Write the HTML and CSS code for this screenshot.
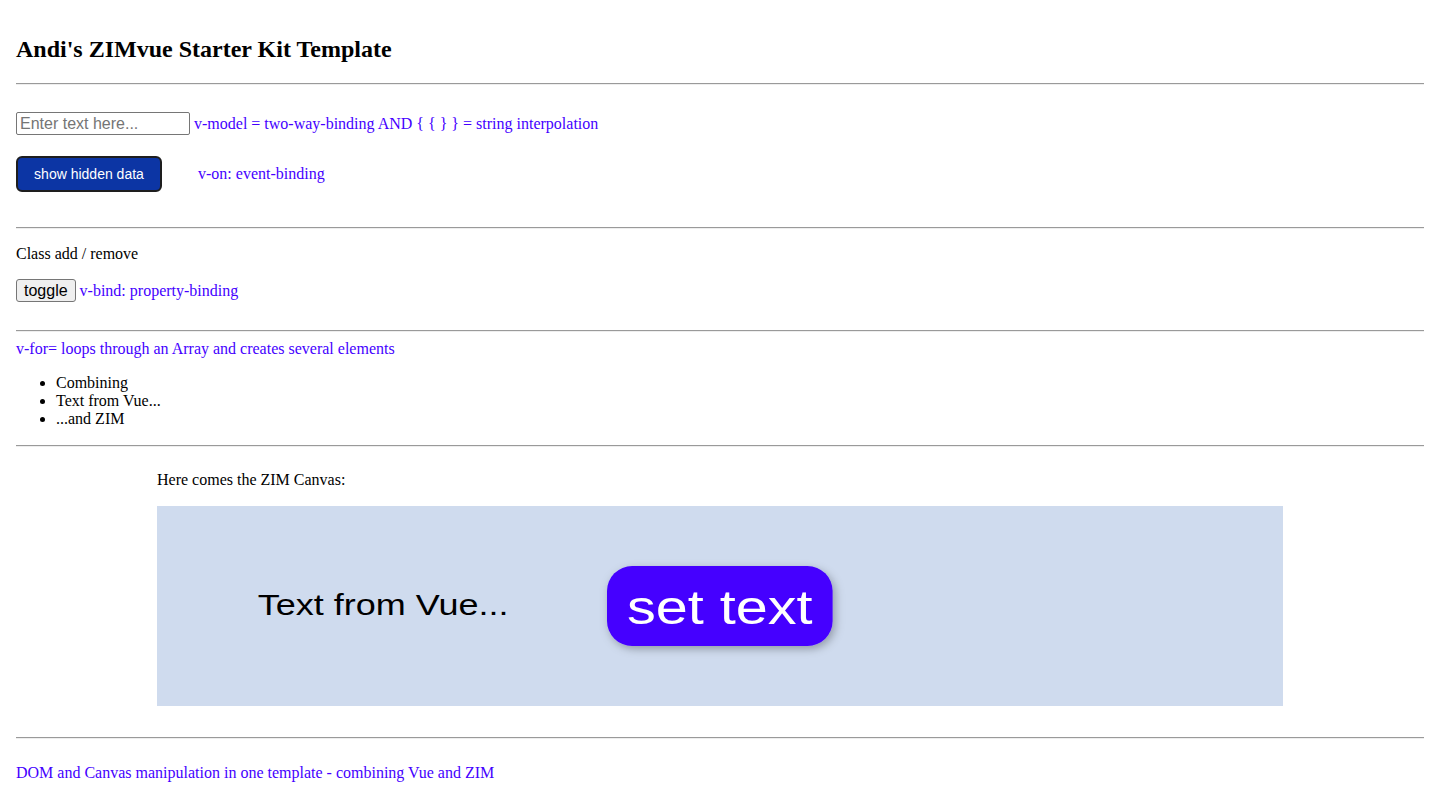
FILE: index.html
```html
<!DOCTYPE html>
<html lang="en">
<head>
<meta charset="utf-8">
<title>Andi's ZIMvue Starter Kit Template</title>
<link rel="stylesheet" href="styles.css">
</head>
<body>
<div class="app">
  <h2 class="title">Andi's ZIMvue Starter Kit Template</h2>
  <hr class="rule">

  <div class="row row-model">
    <input class="text-input" type="text" placeholder="Enter text here...">
    <span class="note">v-model = two-way-binding AND { { } } = string interpolation</span>
  </div>
  <div class="row row-event">
    <button class="btn-primary" type="button">show hidden data</button>
    <span class="note">v-on: event-binding</span>
  </div>

  <hr class="rule rule-after-event">

  <p class="label">Class add / remove</p>
  <div class="row row-bind">
    <button class="btn-default" type="button">toggle</button>
    <span class="note">v-bind: property-binding</span>
  </div>

  <hr class="rule rule-after-bind">

  <span class="note">v-for= loops through an Array and creates several elements</span>
  <ul class="items">
    <li>Combining</li>
    <li>Text from Vue...</li>
    <li>...and ZIM</li>
  </ul>

  <hr class="rule">

  <section class="zim-section">
    <p class="zim-label">Here comes the ZIM Canvas:</p>
    <svg class="zim-canvas" width="1126" height="200" viewBox="0 0 938.33 200" preserveAspectRatio="none" role="img" aria-label="ZIM canvas">
      <defs>
        <filter id="btnShadow" x="-20%" y="-30%" width="140%" height="170%">
          <feDropShadow dx="2" dy="3" stdDeviation="4" flood-color="#000" flood-opacity="0.3"/>
        </filter>
      </defs>
      <rect x="0" y="0" width="938.33" height="200" fill="#cfdbee"/>
      <text x="84" y="109" class="canvas-text">Text from Vue...</text>
      <rect x="375" y="60" width="188" height="80" rx="21" ry="25" fill="#4400ff" filter="url(#btnShadow)"/>
      <text x="469" y="118" text-anchor="middle" class="canvas-btn-text">set text</text>
    </svg>
  </section>

  <hr class="rule rule-after-canvas">

  <p class="note footer-note">DOM and Canvas manipulation in one template - combining Vue and ZIM</p>
</div>
</body>
</html>
```

FILE: styles.css
```css
html, body {
  background: #ffffff;
}

body {
  margin: 8px;
  font-family: "Liberation Serif", "Times New Roman", serif;
  font-size: 16px;
  color: #000;
}

.app {
  padding: 8px;
}

.title {
  font-size: 24px;
  font-weight: bold;
  margin: 20px 0;
}

.rule {
  height: 0;
  margin: 8px 0;
  border: none;
  border-top: 1px solid #9a9a9a;
  border-bottom: 1px solid #eeeeee;
}

.rule-after-event {
  margin-top: 35px;
}

.rule-after-bind {
  margin-top: 28px;
}

.rule-after-canvas {
  margin-top: 31px;
}

.row {
  display: flex;
  align-items: center;
}

.row-model {
  margin-top: 27px;
  gap: 4px;
}

.row-event {
  margin-top: 21px;
  gap: 36px;
}

.row-bind {
  margin-top: 16px;
  gap: 4px;
}

.note {
  color: #4400ff;
}

.text-input {
  box-sizing: border-box;
  width: 174px;
  height: 23px;
  margin: 0;
  padding: 1px 3px;
  border: 1px solid #767676;
  border-radius: 2px;
  font-family: "Liberation Sans", Arial, sans-serif;
  font-size: 16px;
  color: #000;
  background: #fff;
}

.text-input::placeholder {
  color: #757575;
}

.btn-primary {
  box-sizing: border-box;
  width: 146px;
  height: 36px;
  margin: 0;
  padding: 0;
  background: #0c35a4;
  color: #ffffff;
  border: 2px solid #1e1e1e;
  border-radius: 6px;
  font-family: "Liberation Sans", Arial, sans-serif;
  font-size: 14px;
}

.btn-default {
  box-sizing: border-box;
  height: 23px;
  margin: 0;
  padding: 1px 7px;
  background: #efefef;
  color: #000;
  border: 1px solid #767676;
  border-radius: 3px;
  font-family: "Liberation Sans", Arial, sans-serif;
  font-size: 16px;
  line-height: 19px;
}

.label {
  margin: 16px 0 0;
}

.items {
  margin: 16px 0 17px;
  padding-left: 40px;
}

.zim-section {
  width: 1126px;
  margin: 0 auto;
}

.zim-label {
  margin: 24px 0 17px;
}

.zim-canvas {
  display: block;
}

.canvas-text {
  font-family: "Liberation Sans", Arial, sans-serif;
  font-size: 30px;
  fill: #000;
}

.canvas-btn-text {
  font-family: "Liberation Sans", Arial, sans-serif;
  font-size: 48px;
  fill: #ffffff;
}

.footer-note {
  margin: 25px 0 16px;
}
```
